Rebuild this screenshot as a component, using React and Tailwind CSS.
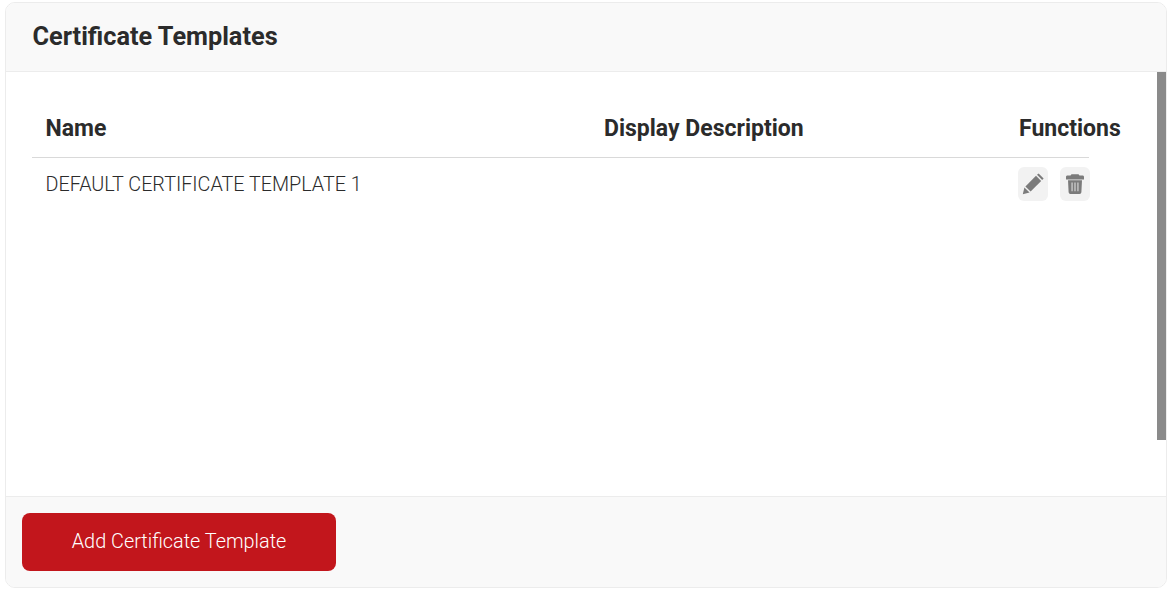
const rows = [{ name: "DEFAULT CERTIFICATE TEMPLATE 1", description: "" }];

function PencilIcon() {
  return (
    <svg width="22" height="22" viewBox="0 0 22 22" fill="currentColor">
      <path d="M0.8 21.2 L2.4 14.4 L7.6 19.6 Z" />
      <path d="M3.4 13.4 L14 2.8 L19.2 8 L8.6 18.6 Z" />
      <path d="M15 1.8 L16.6 0.4 L21.6 5.4 L20.2 7 Z" />
    </svg>
  );
}

function TrashIcon() {
  return (
    <svg width="18" height="20" viewBox="0 0 18 20" fill="currentColor">
      <path d="M5.5 0.3 H12.5 L13.5 1.6 H16.5 C17.4 1.6 18 2.2 18 3 V5.4 H0 V3 C0 2.2 0.6 1.6 1.5 1.6 H4.5 Z" />
      <path
        fillRule="evenodd"
        d="M2 6.2 H16 L15.4 18 C15.3 19.2 14.6 19.9 13.5 19.9 H4.5 C3.4 19.9 2.7 19.2 2.6 18 Z M5.6 8.5 V17.2 H6.5 V8.5 Z M8.55 8.5 V17.2 H9.45 V8.5 Z M11.5 8.5 V17.2 H12.4 V8.5 Z"
      />
    </svg>
  );
}

function IconButton({ children }) {
  return (
    <button className="w-[30px] h-[34px] rounded-md bg-[#f2f2f2] flex items-center justify-center text-[#7b7b7b]">
      {children}
    </button>
  );
}

export default function App() {
  return (
    <div className="h-[595px] bg-white pt-[2px] px-[5px] font-['Roboto',sans-serif] text-[#2b2b2b]">
      <div className="w-[1162px] h-[586px] flex flex-col border border-[#ececec] rounded-[10px] overflow-hidden">
        <div className="h-[69px] shrink-0 bg-[#f9f9f9] border-b border-[#ececec] pl-[26.5px] flex items-center">
          <h1 className="text-[25.3px] font-bold">Certificate Templates</h1>
        </div>

        <div className="flex-1 flex min-h-0 bg-white">
          <div className="flex-1 pl-[26px] pt-[32px]">
            <div className="w-[1057px] h-[54px] pl-[13.5px] border-b border-[#d9d9d9] grid grid-cols-[558.5px_415px_86px] pt-[10px] text-[23px] font-bold leading-[30px] whitespace-nowrap">
              <div>Name</div>
              <div>Display Description</div>
              <div>Functions</div>
            </div>
            {rows.map((row) => (
              <div key={row.name} className="w-[1058px] pl-[13.5px] pt-[9px] grid grid-cols-[558.5px_415px_71px] items-start">
                <div className="text-[19.75px] font-light leading-[35px] whitespace-nowrap">{row.name}</div>
                <div>{row.description}</div>
                <div className="flex justify-between -ml-[1px]">
                  <IconButton><PencilIcon /></IconButton>
                  <IconButton><TrashIcon /></IconButton>
                </div>
              </div>
            ))}
          </div>
          <div className="w-[9px] shrink-0">
            <div className="h-[368px] bg-[#8a8a8a]"></div>
          </div>
        </div>

        <div className="h-[91px] shrink-0 bg-[#f9f9f9] border-t border-[#ececec] pl-[16px] pt-[16px]">
          <button className="w-[314px] h-[58px] rounded-lg bg-[#c2161c] text-white text-[19.85px] font-light">
            Add Certificate Template
          </button>
        </div>
      </div>
    </div>
  );
}
